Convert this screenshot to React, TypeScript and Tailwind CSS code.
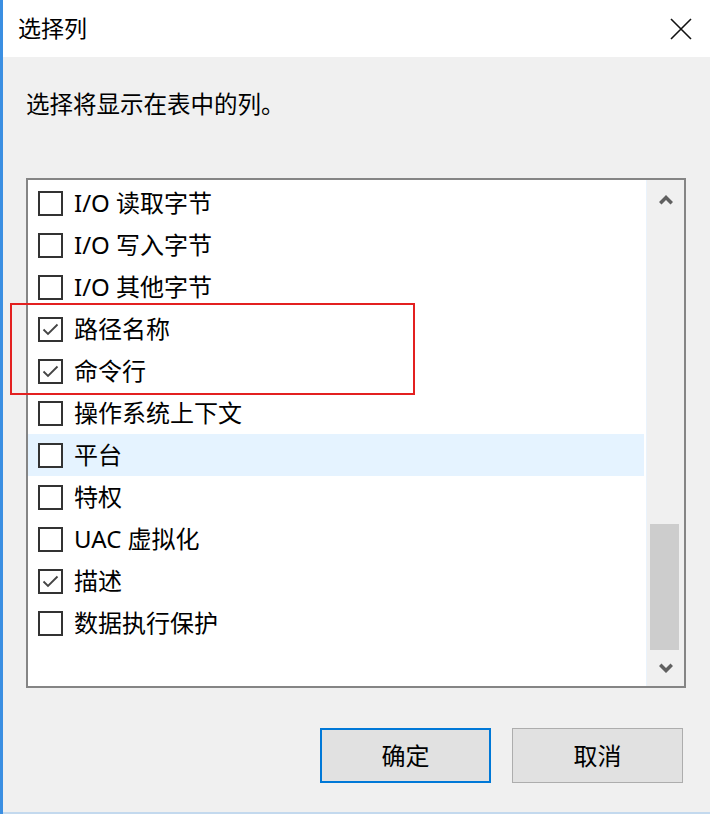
import React from "react";

const rows = [
  { label: "I/O 读取字节", checked: false },
  { label: "I/O 写入字节", checked: false },
  { label: "I/O 其他字节", checked: false },
  { label: "路径名称", checked: true },
  { label: "命令行", checked: true },
  { label: "操作系统上下文", checked: false },
  { label: "平台", checked: false, hover: true },
  { label: "特权", checked: false },
  { label: "UAC 虚拟化", checked: false },
  { label: "描述", checked: true },
  { label: "数据执行保护", checked: false },
];

function CheckBox({ checked }: { checked: boolean }) {
  return (
    <div className="w-[25px] h-[25px] border-2 border-[#333333] bg-white flex items-center justify-center shrink-0">
      {checked && (
        <svg width="19" height="19" viewBox="0 0 19 19">
          <polyline points="2.5,9.5 7,14 16.5,4.5" fill="none" stroke="#444444" strokeWidth="1.8" />
        </svg>
      )}
    </div>
  );
}

export default function App() {
  return (
    <div
      className="relative w-[710px] h-[814px] border-l-[3px] border-[#3b8fe2] bg-[#f0f0f0] flex flex-col text-[#000]"
      style={{ fontFamily: '"Noto Sans", "Noto Sans CJK SC", sans-serif' }}
    >
      {/* Title bar */}
      <div className="h-[57px] bg-white flex items-center justify-between pl-[15px] pr-[17px] shrink-0">
        <span className="text-[23px] leading-none">选择列</span>
        <svg width="24" height="24" viewBox="0 0 24 24">
          <path d="M2 2 L22 22 M22 2 L2 22" stroke="#111" strokeWidth="1.6" fill="none" />
        </svg>
      </div>

      {/* Body */}
      <div className="flex-1 flex flex-col pl-[23px] pr-[24px] pt-[32px]">
        <div className="text-[23.5px] leading-[30px] h-[30px]">选择将显示在表中的列。</div>

        <div className="mt-[59px] h-[510px] border-2 border-[#858585] bg-white flex">
          <div className="flex-1 pt-[2px] pr-[2px]">
            {rows.map((r) => (
              <div
                key={r.label}
                className={`h-[42px] flex items-center gap-[11px] pl-[10px] ${r.hover ? "bg-[#e5f3ff]" : ""}`}
              >
                <CheckBox checked={r.checked} />
                <span className="text-[24px] leading-none">{r.label}</span>
              </div>
            ))}
          </div>

          {/* Scrollbar */}
          <div className="w-[38px] bg-[#f0f0f0] border-l border-[#eaf3fc] flex flex-col">
            <div className="h-[40px] flex items-center justify-center">
              <svg width="14" height="10" viewBox="0 0 14 10">
                <polygon points="0,7 7,0 14,7 11.5,9.5 7,5 2.5,9.5" fill="#606060" />
              </svg>
            </div>
            <div className="flex-1 flex flex-col justify-end pl-[3px] pr-[5px]">
              <div className="h-[126px] bg-[#cdcdcd]" />
            </div>
            <div className="h-[36px] flex items-center justify-center">
              <svg width="14" height="10" viewBox="0 0 14 10">
                <polygon points="0,3 7,10 14,3 11.5,0.5 7,5 2.5,0.5" fill="#606060" />
              </svg>
            </div>
          </div>
        </div>

        <div className="mt-[40px] flex justify-end gap-[21px] pr-[3px]">
          <button className="w-[171px] h-[55px] bg-[#e1e1e1] border-2 border-[#0078d7] text-[24px]">
            确定
          </button>
          <button className="w-[171px] h-[55px] bg-[#e1e1e1] border border-[#adadad] text-[24px]">
            取消
          </button>
        </div>
      </div>

      <div className="h-[2px] bg-[#c3d9ee] shrink-0" />

      {/* Red highlight annotation */}
      <div className="absolute left-[7px] top-[303px] w-[405px] h-[92px] border-2 border-[#e32020] pointer-events-none" />
    </div>
  );
}
